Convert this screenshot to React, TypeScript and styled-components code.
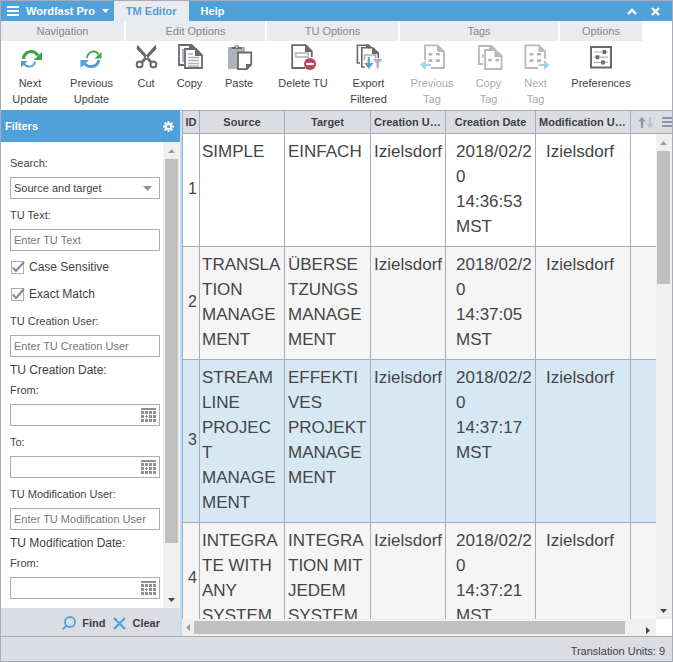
import React from 'react';
import styled, { createGlobalStyle, css } from 'styled-components';

const color = {
  blue: '#50a0da',
  line: '#a9abb6',
  panel: '#dcdde3',
  ribbon: '#e8ecef',
  text: '#3f3f44',
  cell: '#454547',
  muted: '#85868b',
  icon: '#6a6a6c',
  soft: '#b0b2bb',
  track: '#f0f0f0',
  thumb: '#c0c0c0',
};

const GlobalStyle = createGlobalStyle`
  * { box-sizing: border-box; }
  body { margin: 0; background: #fff; }
  body, button, input, select, table {
    font-family: "Liberation Sans", Arial, sans-serif;
    font-size: 11px;
    color: ${color.text};
  }
  button { border: 0; padding: 0; background: none; cursor: pointer; }
  svg { display: block; flex: none; }
`;

const Window = styled.div`
  display: flex;
  flex-direction: column;
  height: 100vh;
  border: 1px solid ${color.line};
  overflow: hidden;
`;

/* ---------- title bar ---------- */

const TitleBar = styled.header`
  display: flex;
  flex: none;
  height: 20px;
  background: ${color.blue};
`;

const TitleTab = styled.button<{ $active?: boolean }>`
  display: flex;
  align-items: center;
  gap: 7px;
  padding: 0 12px;
  font-weight: bold;
  color: ${(p) => (p.$active ? color.blue : '#fff')};
  background: ${(p) => (p.$active ? color.ribbon : 'transparent')};
`;

const MenuTab = styled(TitleTab)`
  padding: 0 5px 0 6px;
`;

const WindowControls = styled.div`
  display: flex;
  align-items: center;
  gap: 14px;
  margin-left: auto;
  padding-right: 12px;
`;

/* ---------- ribbon ---------- */

const Ribbon = styled.nav`
  display: flex;
  flex: none;
  gap: 2px;
  height: 88px;
`;

const RibbonGroup = styled.section`
  display: flex;
  flex-direction: column;
`;

const GroupTitle = styled.h2`
  margin: 0;
  font-size: 11px;
  font-weight: normal;
  line-height: 20px;
  text-align: center;
  color: ${color.muted};
  background: ${color.ribbon};
`;

const Tools = styled.div`
  display: flex;
  align-items: flex-start;
`;

const Tool = styled.button<{ $width: number }>`
  display: flex;
  flex-direction: column;
  align-items: center;
  gap: 4px;
  width: ${(p) => p.$width}px;
  padding-top: 2px;
  line-height: 16px;
  white-space: pre-line;
  &:disabled { color: #a9aaae; cursor: default; }
`;

/* ---------- filters ---------- */

const Main = styled.main`
  display: flex;
  flex: 1;
  min-height: 0;
`;

const Sidebar = styled.aside`
  display: flex;
  flex-direction: column;
  flex: none;
  width: 181px;
  border-right: 2px solid #bbdff8;
`;

const SidebarHeader = styled.div`
  display: flex;
  flex: none;
  align-items: center;
  justify-content: space-between;
  height: 33px;
  padding: 0 6px 0 4px;
  border-top: 1px solid #fff;
  background: ${color.blue};
  background-clip: padding-box;
`;

const SidebarTitle = styled.h2`
  margin: 0;
  font-size: 11px;
  color: #fff;
`;

const SidebarBody = styled.div`
  display: flex;
  flex: 1;
  min-height: 0;
`;

const FilterForm = styled.form`
  display: flex;
  flex-direction: column;
  flex: 1;
  gap: 8px;
  min-width: 0;
  padding: 13px 3px 0 9px;
  overflow: hidden;
`;

const Field = styled.div`
  display: flex;
  flex-direction: column;
  flex: none;
  gap: 6px;
  line-height: 16px;
`;

const Checks = styled.div`
  display: flex;
  flex-direction: column;
  flex: none;
  gap: 11px;
  padding-bottom: 3px;
`;

const CheckLabel = styled.label`
  display: flex;
  align-items: center;
  gap: 4px;
  font-size: 12px;
  line-height: 16px;
`;

const CheckMark = styled.span`
  display: grid;
  > * { grid-area: 1 / 1; }
  input { width: 15px; height: 14px; margin: 0; opacity: 0; }
  path { visibility: hidden; }
  input:checked + svg path { visibility: visible; }
`;

const DateGroup = styled.fieldset`
  display: flex;
  flex-direction: column;
  flex: none;
  gap: 8px;
  min-width: 0;
  margin: -3px 0 0;
  padding: 0;
  border: 0;
`;

const DateTitle = styled.legend`
  padding: 0 0 4px;
  font-size: 12px;
  line-height: 16px;
`;

const boxed = css`
  width: 100%;
  height: 22px;
  padding: 0 4px;
  border: 1px solid ${color.line};
  border-radius: 0;
  outline: 0;
  background: #fff;
`;

const TextInput = styled.input`
  ${boxed}
  padding: 0 3px;
  &::placeholder { color: #76777b; opacity: 1; }
`;

const SelectBox = styled.div`
  display: grid;
  align-items: center;
  > * { grid-area: 1 / 1; }
  svg { justify-self: end; margin-right: 8px; pointer-events: none; }
`;

const Select = styled.select`
  ${boxed}
  padding: 0 3px;
  appearance: none;
`;

const DateBox = styled.div`
  ${boxed}
  display: flex;
  align-items: center;
  padding-right: 3px;
`;

const DateInput = styled.input`
  flex: 1;
  min-width: 0;
  padding: 0;
  border: 0;
  outline: 0;
`;

const SidebarActions = styled.div`
  display: flex;
  flex: none;
  align-items: center;
  justify-content: flex-end;
  gap: 8px;
  height: 28px;
  padding: 2px 20px 0 0;
  background: ${color.panel};
`;

const Action = styled.button`
  display: flex;
  align-items: center;
  gap: 6px;
  font-weight: bold;
`;

/* ---------- scroll bars ---------- */

const VerticalBar = styled.div<{ $width: number }>`
  display: flex;
  flex-direction: column;
  flex: none;
  width: ${(p) => p.$width}px;
  padding: 0 2px 0 ${(p) => p.$width - 15}px;
  background: ${color.track};
`;

const HorizontalBar = styled.div`
  display: flex;
  flex: none;
  height: 17px;
  margin-right: 16px;
  padding: 2px 0;
  background: ${color.track};
`;

const Thumb = styled.div<{ $size: string }>`
  flex: 0 0 ${(p) => p.$size};
  background: ${color.thumb};
`;

const ArrowSlot = styled.div<{ $size: number; $end?: boolean }>`
  display: flex;
  flex: 0 0 ${(p) => p.$size}px;
  align-items: center;
  justify-content: center;
  ${(p) => p.$end && 'margin-top: auto; margin-left: auto;'}
`;

const EndSlot = styled(ArrowSlot)`
  margin: auto 0 0;
`;

/* ---------- table ---------- */

const GridPane = styled.section`
  display: flex;
  flex-direction: column;
  flex: 1;
  min-width: 0;
  padding-top: 1px;
`;

const TableArea = styled.div`
  display: grid;
  grid-template: 24px minmax(0, 1fr) / minmax(0, 1fr) 16px;
  flex: 1;
  min-height: 0;
  border-left: 1px solid ${color.line};
  overflow: hidden;
`;

const TableClip = styled.div`
  grid-area: 1 / 1 / 3 / 3;
  min-height: 0;
  overflow: hidden;
`;

const BodyBar = styled(VerticalBar)`
  grid-area: 2 / 2;
`;

const Table = styled.table`
  width: 100%;
  table-layout: fixed;
  border-collapse: separate;
  border-spacing: 0;
`;

const Col = styled.col<{ $width?: number }>`
  width: ${(p) => (p.$width ? `${p.$width}px` : 'auto')};
`;

const HeadCell = styled.th`
  height: 24px;
  padding: 0 3px;
  border: solid ${color.line};
  border-width: 1px 1px 1px 0;
  background: ${color.panel};
  overflow: hidden;
  text-overflow: ellipsis;
  white-space: nowrap;
  &:first-child { padding: 0; text-overflow: clip; }
  &:last-child { padding: 0 0 0 7px; border-right: 0; }
`;

const HeadTools = styled.div`
  display: flex;
  align-items: center;
  justify-content: space-between;
`;

const Row = styled.tr<{ $tone: string }>`
  background: ${(p) => p.$tone};
`;

const Cell = styled.td<{ $left?: number; $right?: number }>`
  padding: 5px ${(p) => p.$right ?? 3}px 7px ${(p) => p.$left ?? 3}px;
  border: solid ${color.line};
  border-width: 0 1px 1px 0;
  font-size: 17px;
  line-height: 25px;
  color: ${color.cell};
  vertical-align: top;
  overflow-wrap: break-word;
  &:last-child { border-right: 0; }
`;

const IdCell = styled(Cell)`
  padding: 0 2px 3px;
  text-align: right;
  vertical-align: middle;
  font-size: 16px;
`;

const StatusBar = styled.footer`
  flex: none;
  height: 25px;
  padding: 3px 7px 0;
  border-top: 1px solid ${color.line};
  line-height: 22px;
  text-align: right;
  background: ${color.panel};
`;

/* ---------- drawings ---------- */

const Icon = ({ children }: { children: React.ReactNode }) => (
  <svg width="28" height="28" viewBox="0 0 28 28" fill="none" aria-hidden="true">{children}</svg>
);

const green = '#3da447';

const NextUpdateIcon = () => (
  <Icon>
    <path d="M7.4 16C8.4 8 17.5 6 22 12.5" stroke={green} strokeWidth="3" />
    <path d="M26 9v8h-8.5z" fill={green} />
    <path d="M8 20.5C10.5 25 17.5 25 19.2 18.5" stroke={color.blue} strokeWidth="1.8" />
    <path d="M5 18h6.5L5 24.5z" fill={color.blue} />
  </Icon>
);

const PreviousUpdateIcon = () => (
  <Icon>
    <path d="M9 15C10 7.5 18 6.5 20.5 11.5" stroke={green} strokeWidth="1.8" />
    <path d="M23.5 9v6.5h-7z" fill={green} />
    <path d="M5.5 19.5C9.5 25.5 19.5 25 20.8 17" stroke={color.blue} strokeWidth="3" />
    <path d="M2.5 17H11L2.5 25z" fill={color.blue} />
  </Icon>
);

const CutIcon = () => (
  <Icon>
    <path d="M5.6 2.5 20.6 19.4 18.4 20 5 5.8z M23.4 2.5 8.4 19.4 10.6 20 24 5.8z" fill={color.icon} stroke={color.icon} />
    <circle cx="7.6" cy="21.4" r="2.9" fill="#fff" stroke={color.icon} strokeWidth="2" />
    <circle cx="21.4" cy="21.4" r="2.9" fill="#fff" stroke={color.icon} strokeWidth="2" />
  </Icon>
);

const CopyIcon = () => (
  <Icon>
    <path d="M8 22H3V2h11l3 3" stroke={color.icon} strokeWidth="1.8" />
    <path d="M6 6h2v13H6z" fill={color.soft} />
    <path d="M13 1h3l4 4h-7z" fill={color.icon} />
    <path d="M9 6h11l6 6v13H9z" fill="#fff" stroke={color.icon} strokeWidth="1.8" />
    <path d="M19 5.2V13h7.8z" fill={color.icon} />
    <path d="M12 11h5M12 14.5h11M12 17.5h11M12 20.5h11M12 23h11" stroke={color.soft} strokeWidth="1.4" />
  </Icon>
);

const PasteIcon = () => (
  <Icon>
    <path d="M3 4h17v22H3z" fill={color.soft} />
    <path d="M6.5 6V4h2.8a2.6 2.6 0 0 1 5 0h2.7v2z" fill={color.icon} />
    <circle cx="11.8" cy="3.8" r="1" fill="#fff" />
    <path d="M13 9.5h13.2v12.2l-4.4 4.5H13z" fill="#fff" stroke={color.icon} strokeWidth="1.8" />
    <path d="M27 21h-6v6z" fill={color.icon} />
  </Icon>
);

const DeleteIcon = () => (
  <Icon>
    <path d="M16 25H3.2V2.2h13.6l6 6V14" stroke={color.icon} strokeWidth="1.8" />
    <path d="M16 1.3V9h7.7z" fill={color.icon} />
    <path d="M6.8 10h12.4v4H6.8z" fill="#fff" stroke={color.soft} strokeWidth="1.4" />
    <circle cx="21" cy="21" r="6" fill="#c2415c" />
    <path d="M17.2 21h7.6" stroke="#fff" strokeWidth="2.2" />
  </Icon>
);

const ExportIcon = () => (
  <Icon>
    <path d="M5 20H2.4V2.2h10l3 3" stroke={color.icon} strokeWidth="1.6" />
    <path d="M10 24H6.8V4.8h11l5.4 5.4V15" stroke={color.icon} strokeWidth="1.6" />
    <path d="M11 1.3h3l3.5 3.5H11zM17 4v7h7z" fill={color.icon} />
    <path d="M9.5 17v-5h11v3.5" stroke={color.soft} strokeWidth="1.6" />
    <path d="M13.8 14v7" stroke={color.blue} strokeWidth="2.2" />
    <path d="M9.2 20h9.2l-4.6 6z" fill={color.blue} />
    <path d="M17.8 16h9.8l-3.8 4.6V26L21.4 24.5v-4z" fill={color.soft} />
  </Icon>
);

const TagDots = ({ x }: { x: number }) => (
  <path
    d={`M${x} 10h3.8v2.6H${x}zM${x + 7.5} 10h3.8v2.6h-3.8zM${x} 16.3h3.8v2.6H${x}zM${x + 7.5} 16.3h3.8v2.6h-3.8z`}
    fill={color.soft}
  />
);

const PreviousTagIcon = () => (
  <Icon>
    <path d="M7 17V2.3h12.5L26 8.5V25H13" stroke="#b8b9bc" strokeWidth="1.8" />
    <path d="M19 1.4V9h8z" fill="#b8b9bc" />
    <TagDots x={10.5} />
    <path d="M5 22h8" stroke="#a5d2f1" strokeWidth="2.4" />
    <path d="M7.6 17v10L2 22z" fill="#a5d2f1" />
  </Icon>
);

const CopyTagIcon = () => (
  <Icon>
    <path d="M8 21H4V3h10.5l3 3" stroke="#b8b9bc" strokeWidth="1.8" />
    <path d="M14 2h3l4 4h-7z" fill="#b8b9bc" />
    <path d="M10 7h10l6.6 6v13H10z" fill="#fff" stroke="#b8b9bc" strokeWidth="1.8" />
    <path d="M19.5 6v8h8z" fill="#b8b9bc" />
    <path d="M13.2 15.8h3.6v2.6h-3.6zM20.6 15.8h3.6v2.6h-3.6zM7 11.8h1.8v2.6H7z" fill="#b8b9bc" />
  </Icon>
);

const NextTagIcon = () => (
  <Icon>
    <path d="M16 25H3.4V2.3h13.4L23 8.5V16" stroke="#b8b9bc" strokeWidth="1.8" />
    <path d="M16.5 1.4V9h7.4z" fill="#b8b9bc" />
    <TagDots x={7.6} />
    <path d="M16.5 22H25" stroke="#a5d2f1" strokeWidth="2.4" />
    <path d="M22 17v10l5.8-5z" fill="#a5d2f1" />
  </Icon>
);

const PreferencesIcon = () => (
  <Icon>
    <path d="M4 4h20v20.4H4z" stroke={color.icon} strokeWidth="2" />
    <path d="M7 9h14M7 14.2h14M7 19.4h14" stroke={color.soft} strokeWidth="1.2" />
    <path d="M15.6 7h3.6v4h-3.6zM8.6 12.2h3.6v4H8.6zM14.2 17.4h3.6v4h-3.6z" fill={color.icon} />
  </Icon>
);

const arrows = {
  up: 'M0 4h7L3.5 0z',
  down: 'M0 0h7L3.5 4z',
  left: 'M4 0v7L0 3.5z',
  right: 'M0 0v7l4-3.5z',
};

const Arrow = ({ to, fill }: { to: keyof typeof arrows; fill: string }) => {
  const flat = to === 'up' || to === 'down';
  return (
    <svg width={flat ? 7 : 4} height={flat ? 4 : 7} aria-hidden="true">
      <path d={arrows[to]} fill={fill} />
    </svg>
  );
};

const MenuIcon = () => (
  <svg width="12" height="10" aria-hidden="true">
    <path d="M0 1h12M0 5h12M0 9h12" stroke="#fff" strokeWidth="2" />
  </svg>
);

const GearIcon = () => (
  <svg width="11" height="11" viewBox="0 0 11 11" fill="none" aria-hidden="true">
    <circle cx="5.5" cy="5.5" r="2.6" stroke="#fff" strokeWidth="2" />
    <path
      d="M5.5 0v2.5M5.5 8.5V11M0 5.5h2.5M8.5 5.5H11M1.6 1.6l1.8 1.8M7.6 7.6l1.8 1.8M9.4 1.6 7.6 3.4M3.4 7.6 1.6 9.4"
      stroke="#fff"
      strokeWidth="2"
    />
  </svg>
);

const CalendarIcon = () => (
  <svg width="15" height="14" aria-hidden="true">
    <path d="M0 1h15" stroke="#8f8f92" strokeWidth="2" />
    <path
      d="M0 4.5h15M0 8.5h15M0 12.5h15"
      stroke="#8f8f92"
      strokeWidth="3"
      strokeDasharray="3 1"
    />
    <path d="M4 7h1v1H4zM6 7h1v1H6zM4 9h1v1H4zM6 9h1v1H6z" fill="#fff" />
  </svg>
);

const SearchIcon = () => (
  <svg width="14" height="14" viewBox="0 0 14 14" fill="none" aria-hidden="true">
    <circle cx="8" cy="6" r="5" stroke={color.blue} strokeWidth="1.8" />
    <path d="M4.4 9.6.8 13.2" stroke={color.blue} strokeWidth="2" />
  </svg>
);

const ClearIcon = () => (
  <svg width="13" height="13" viewBox="0 0 13 13" fill="none" aria-hidden="true">
    <path d="M1 1l11 11M12 1 1 12" stroke={color.blue} strokeWidth="2.2" />
  </svg>
);

const SortIcon = () => (
  <svg width="16" height="13" viewBox="0 0 16 13" fill="none" aria-hidden="true">
    <path d="M4 12V3" stroke="#9094ae" strokeWidth="2.2" />
    <path d="M0 5.5 4 .8l4 4.7z" fill="#9094ae" />
    <path d="M12 1v9" stroke="#bcbecd" strokeWidth="2.2" />
    <path d="M8 7.5l4 4.7 4-4.7z" fill="#bcbecd" />
  </svg>
);

const ListIcon = () => (
  <svg width="10" height="12" aria-hidden="true">
    <path d="M0 2h10M0 6h10M0 10h10" stroke="#9094ae" strokeWidth="2" />
  </svg>
);

/* ---------- data ---------- */

type ToolItem = { label: string; width: number; icon: React.ReactNode; disabled?: boolean };

const groups: { title: string; tools: ToolItem[] }[] = [
  {
    title: 'Navigation',
    tools: [
      { label: 'Next\nUpdate', width: 58, icon: <NextUpdateIcon /> },
      { label: 'Previous\nUpdate', width: 65, icon: <PreviousUpdateIcon /> },
    ],
  },
  {
    title: 'Edit Options',
    tools: [
      { label: 'Cut', width: 40, icon: <CutIcon /> },
      { label: 'Copy', width: 47, icon: <CopyIcon /> },
      { label: 'Paste', width: 52, icon: <PasteIcon /> },
    ],
  },
  {
    title: 'TU Options',
    tools: [
      { label: 'Delete TU', width: 72, icon: <DeleteIcon /> },
      { label: 'Export\nFiltered', width: 59, icon: <ExportIcon /> },
    ],
  },
  {
    title: 'Tags',
    tools: [
      { label: 'Previous\nTag', width: 64, icon: <PreviousTagIcon />, disabled: true },
      { label: 'Copy\nTag', width: 49, icon: <CopyTagIcon />, disabled: true },
      { label: 'Next\nTag', width: 45, icon: <NextTagIcon />, disabled: true },
    ],
  },
  { title: 'Options', tools: [{ label: 'Preferences', width: 82, icon: <PreferencesIcon /> }] },
];

const columns = [
  { title: 'ID', width: 17 },
  { title: 'Source', width: 85 },
  { title: 'Target', width: 86 },
  { title: 'Creation User', width: 75 },
  { title: 'Creation Date', width: 90 },
  { title: 'Modification User', width: 95 },
];

const units = [
  { id: 1, source: 'SIMPLE', target: 'EINFACH', time: '14:36:53', tone: '#fff' },
  { id: 2, source: 'TRANSLATION MANAGEMENT', target: 'ÜBERSETZUNGSMANAGEMENT', time: '14:37:05', tone: '#f5f5f5' },
  { id: 3, source: 'STREAMLINE PROJECT MANAGEMENT', target: 'EFFEKTIVES PROJEKTMANAGEMENT', time: '14:37:17', tone: '#d6e8f4' },
  { id: 4, source: 'INTEGRATE WITH ANY SYSTEM', target: 'INTEGRATION MIT JEDEM SYSTEM', time: '14:37:21', tone: '#f5f5f5' },
];

/* ---------- composed parts ---------- */

const DateField = ({ id, label }: { id: string; label: string }) => (
  <Field>
    <label htmlFor={id}>{label}</label>
    <DateBox>
      <DateInput id={id} type="text" />
      <button type="button" aria-label="Choose date"><CalendarIcon /></button>
    </DateBox>
  </Field>
);

const TextField = ({ id, label, placeholder }: { id: string; label: string; placeholder: string }) => (
  <Field>
    <label htmlFor={id}>{label}</label>
    <TextInput id={id} type="text" placeholder={placeholder} />
  </Field>
);

const CheckField = ({ label }: { label: string }) => (
  <CheckLabel>
    <CheckMark>
      <input type="checkbox" defaultChecked />
      <svg width="15" height="14" fill="none" aria-hidden="true">
        <rect x="1.5" y="1.5" width="12" height="12" stroke={color.line} />
        <path d="M3 7.5l3 3.5L14 2" stroke="#83858f" strokeWidth="2" />
      </svg>
    </CheckMark>
    {label}
  </CheckLabel>
);

export default function App() {
  return (
    <>
      <GlobalStyle />
      <Window>
        <TitleBar>
          <MenuTab>
            <MenuIcon />
            Wordfast Pro
            <svg width="7" height="4" aria-hidden="true"><path d={arrows.down} fill="#fff" /></svg>
          </MenuTab>
          <TitleTab $active>TM Editor</TitleTab>
          <TitleTab>Help</TitleTab>
          <WindowControls>
            <button aria-label="Collapse ribbon">
              <svg width="10" height="7" fill="none"><path d="M1 6l4-4 4 4" stroke="#fff" strokeWidth="2.4" /></svg>
            </button>
            <button aria-label="Close">
              <svg width="9" height="9" fill="none"><path d="M1 1l7 7M8 1 1 8" stroke="#fff" strokeWidth="2.4" /></svg>
            </button>
          </WindowControls>
        </TitleBar>

        <Ribbon>
          {groups.map((group) => (
            <RibbonGroup key={group.title}>
              <GroupTitle>{group.title}</GroupTitle>
              <Tools>
                {group.tools.map((tool) => (
                  <Tool key={tool.label} $width={tool.width} disabled={tool.disabled}>
                    {tool.icon}
                    {tool.label}
                  </Tool>
                ))}
              </Tools>
            </RibbonGroup>
          ))}
        </Ribbon>

        <Main>
          <Sidebar>
            <SidebarHeader>
              <SidebarTitle>Filters</SidebarTitle>
              <button aria-label="Filter settings"><GearIcon /></button>
            </SidebarHeader>
            <SidebarBody>
              <FilterForm id="filters" onSubmit={(e) => e.preventDefault()}>
                <Field>
                  <label htmlFor="search">Search:</label>
                  <SelectBox>
                    <Select id="search" defaultValue="both">
                      <option value="both">Source and target</option>
                    </Select>
                    <svg width="9" height="5" aria-hidden="true"><path d="M0 0h9L4.5 5z" fill="#929292" /></svg>
                  </SelectBox>
                </Field>
                <TextField id="tu-text" label="TU Text:" placeholder="Enter TU Text" />
                <Checks>
                  <CheckField label="Case Sensitive" />
                  <CheckField label="Exact Match" />
                </Checks>
                <TextField id="creation-user" label="TU Creation User:" placeholder="Enter TU Creation User" />
                <DateGroup>
                  <DateTitle>TU Creation Date:</DateTitle>
                  <DateField id="creation-from" label="From:" />
                  <DateField id="creation-to" label="To:" />
                </DateGroup>
                <TextField id="modification-user" label="TU Modification User:" placeholder="Enter TU Modification User" />
                <DateGroup>
                  <DateTitle>TU Modification Date:</DateTitle>
                  <DateField id="modification-from" label="From:" />
                </DateGroup>
              </FilterForm>
              <VerticalBar $width={17}>
                <ArrowSlot $size={17}><Arrow to="up" fill="#9b9b9b" /></ArrowSlot>
                <Thumb $size="82.5%" />
                <EndSlot $size={17}><Arrow to="down" fill="#444" /></EndSlot>
              </VerticalBar>
            </SidebarBody>
            <SidebarActions>
              <Action type="submit" form="filters"><SearchIcon />Find</Action>
              <Action type="reset" form="filters"><ClearIcon />Clear</Action>
            </SidebarActions>
          </Sidebar>

          <GridPane>
            <TableArea>
              <TableClip>
                <Table>
                  <colgroup>
                    {columns.map((c) => <Col key={c.title} $width={c.width} />)}
                    <Col />
                  </colgroup>
                  <thead>
                    <tr>
                      {columns.map((c) => <HeadCell key={c.title} scope="col">{c.title}</HeadCell>)}
                      <HeadCell scope="col" aria-label="Table options">
                        <HeadTools>
                          <button aria-label="Sort"><SortIcon /></button>
                          <button aria-label="Columns"><ListIcon /></button>
                        </HeadTools>
                      </HeadCell>
                    </tr>
                  </thead>
                  <tbody>
                    {units.map((u) => (
                      <Row key={u.id} $tone={u.tone}>
                        <IdCell>{u.id}</IdCell>
                        <Cell $left={2}>{u.source}</Cell>
                        <Cell>{u.target}</Cell>
                        <Cell $right={0}>Izielsdorf</Cell>
                        <Cell $left={10}>2018/02/20 {u.time} MST</Cell>
                        <Cell $left={10}>Izielsdorf</Cell>
                        <Cell />
                      </Row>
                    ))}
                  </tbody>
                </Table>
              </TableClip>
              <BodyBar $width={16}>
                <ArrowSlot $size={17}><Arrow to="up" fill="#9b9b9b" /></ArrowSlot>
                <Thumb $size="27.5%" />
                <EndSlot $size={17}><Arrow to="down" fill="#444" /></EndSlot>
              </BodyBar>
            </TableArea>
            <HorizontalBar>
              <ArrowSlot $size={12}><Arrow to="left" fill="#9b9b9b" /></ArrowSlot>
              <Thumb $size="91%" />
              <ArrowSlot $size={17} $end><Arrow to="right" fill="#444" /></ArrowSlot>
            </HorizontalBar>
          </GridPane>
        </Main>

        <StatusBar>Translation Units: 9</StatusBar>
      </Window>
    </>
  );
}
